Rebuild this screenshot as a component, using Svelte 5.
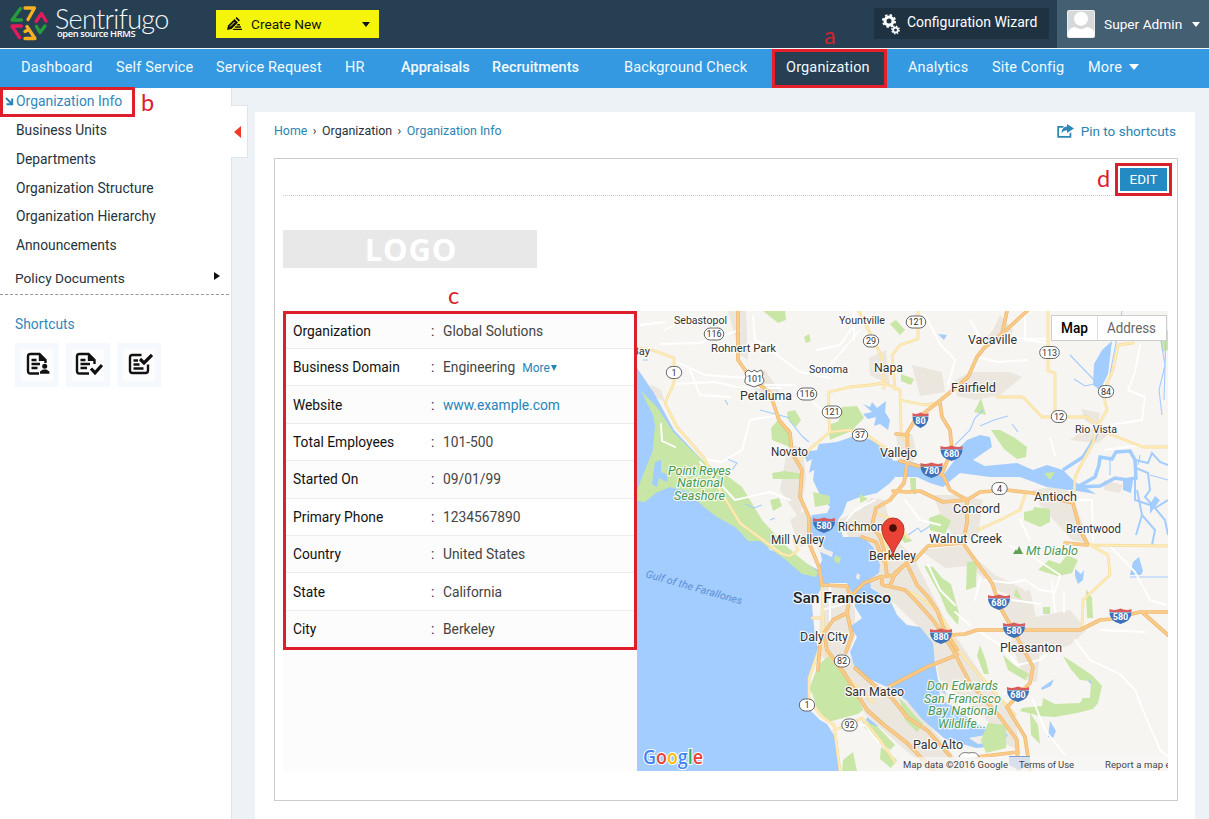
<script>
  const menu = ['Business Units', 'Departments', 'Organization Structure', 'Organization Hierarchy', 'Announcements'];

  const details = [
    ['Organization', 'Global Solutions'],
    ['Business Domain', 'Engineering', 'more'],
    ['Website', 'www.example.com', 'link'],
    ['Total Employees', '101-500'],
    ['Started On', '09/01/99'],
    ['Primary Phone', '1234567890'],
    ['Country', 'United States'],
    ['State', 'California'],
    ['City', 'Berkeley']
  ];

  const yellowRoads = [
    'M637 348L652 350 674 358 674 383 665 403 677 427 704 458 720 490 740 523 767 543 782 554 790 556 798 550 794 540',
    'M800 460L812 447 830 432 850 430 868 436 884 447 900 455',
    'M830 432L828 410 829 392 850 387 870 385 884 383 900 390 901 433 908 445',
    'M859 311L871 335 882 357 884 388M895 389L892 355 900 345 918 339 918 311',
    'M900 400L925 405 937 403M997 397L1023 397 1042 417 1087 417 1107 433 1143 447 1168 447',
    'M1048 311L1048 371 1055 373 1055 417',
    'M1133 343L1118 345 1113 370 1103 393 1107 410 1097 427 1093 443 1082 463 1075 477 1074 500',
    'M822 585L824 645 817 655 809 678 809 698 820 715 834 725 840 771M812 618L822 618',
    'M834 730L850 724 862 718 880 740 895 762M826 652L850 680 873 702',
    'M1087 543L1108 555 1110 575 1083 600 1082 627M1088 545L1168 546',
    'M900 588L920 597 938 612 950 630 958 650 988 685 1015 715',
    'M978 530L1000 520 1020 510 1025 495M878 514L895 520 908 538M888 563L886 545 880 530'
  ];

  const orangeRoads = [
    'M738 311L738 360 750 377 770 393 779 420 790 433 792 453 802 470 800 497 809 517 809 543 819 567 822 585',
    'M822 585L847 586 850 597 847 613 833 620 824 633 827 650 844 673 867 710 884 725 907 743 934 771',
    'M820 642L818 670M855 668L873 684 892 698 907 717 928 731 950 756',
    'M847 613L852 635 846 652',
    'M849 598L864 583 880 577 895 575 903 566',
    'M887 576L884 550 880 537 872 525 876 508 890 500 904 483 908 457 907 433 915 420 937 403 953 390 968 377 977 357 984 348 1003 333 1027 311',
    'M1007 311L1002 334M940 403L942 417 950 430 952 450 942 473 950 490 967 500 967 523 963 543 980 567 992 583 1000 607 1017 637 1033 667 1030 683 1007 707 1025 737 1030 771',
    'M893 491L908 492 920 491 943 502 967 500 980 492 1007 490 1033 493 1073 503 1080 530 1087 543',
    'M890 586L895 573 907 563 915 560 928 546 963 543',
    'M882 580Q880 586 888 586L905 590 917 602 933 620 953 650 970 683 1000 717 1017 740 1018 771M862 537L876 542 883 560',
    'M907 564L917 585 928 597 937 610 943 627 957 650M950 635L965 634 977 630 1000 630 1080 630 1100 620 1112 619 1140 612 1168 612M1142 612L1168 635',
    'M890 686L927 667 957 655M977 757L1018 752M900 461L925 468 942 475M896 434L908 435M1065 543L1087 545'
  ];

  const whiteRoads = [
    'M660 344L700 343 740 330M675 384L715 382 737 387 780 388M672 360L705 375 750 378M664 330L690 318',
    'M700 462L735 500 770 492 790 500M778 415L750 420 742 450 722 462 704 459M765 385L795 385 830 418',
    'M661 424L662 441 675 447M753 316L755 340 775 350M817 350L840 345 852 328M854 311L854 340',
    'M925 315L940 344 955 360 948 385M977 357L998 362 1027 360M1000 338L1048 339M1025 311L1025 340 1048 343',
    'M1140 345L1135 372 1128 390 1145 397 1142 420 1110 425M1105 450L1140 445M1050 438L1055 455',
    'M905 500L920 520 940 525M985 580L1010 583 1025 580 1040 590 1055 592 1060 575 1030 555 1010 546',
    'M977 630L1000 645 1018 665 1040 660 1057 645M1075 640L1090 660 1120 674 1135 690 1145 715 1160 750 1168 757',
    'M1070 500L1092 500 1093 540M1110 546L1135 572 1150 600 1166 605M1100 630L1145 632',
    'M928 565L940 590 955 605M975 600L980 580M955 612L970 625M1033 700L1045 730 1065 755M1005 693L1025 690',
    'M822 600L843 600M830 588L830 625M822 610L850 602M843 723L865 725 878 742M1020 520L1030 540',
    'M1052 582L1055 612M1064 592L1064 612M1012 600L1040 604M640 325L665 322M690 370L700 395 730 397',
    'M845 522L855 510 875 500M860 330L830 365M985 345L970 320M770 350L800 372 830 378'
  ];

  const parks = [
    'M641 391L657 407 674 433 704 462 730 478 742 487 747 495 762 520 785 545 800 558 818 572 816 577 802 574 786 560 768 547 760 541 748 541 742 534 735 527 717 517 704 507 688 492 670 487 656 493 645 502 637 501 637 490 653 450 655 425 653 415Z',
    'M763 311L785 311 786 320 778 323Z', 'M804 337L809 334 811 341 806 343Z',
    'M771 428L778 420 791 430 790 447 772 440Z', 'M787 412L795 410 801 420 796 427 788 420Z',
    'M842 407L857 406 864 418 850 432 838 424Z', 'M772 473L785 471 803 474 801 479 773 479Z',
    'M813 492L830 496 830 504 815 507Z', 'M770 500L779 498 782 506 773 511Z', 'M828 425L842 420 849 432 830 440Z',
    'M896 320L905 330 900 335 890 324Z M901 374L914 379 911 385 901 381Z',
    'M974 412L981 398 986 415Z', 'M991 430L1000 430 1015 438 1027 447 1026 457 1017 459 1004 449Z',
    'M1024 512L1033 510 1034 507 1050 509 1050 522 1040 527 1024 520Z', 'M1044 473L1055 472 1050 480Z',
    'M929 518L940 514 951 521 945 534 930 530Z M910 478L916 478 916 495 911 492Z',
    'M967 562L977 561 976 587 966 590Z', 'M1038 570L1049 560 1060 564 1067 555 1078 560 1072 573 1058 576Z',
    'M924 566L933 567 942 578 951 584 959 614 958 625 947 612 940 595Z',
    'M980 645L986 661 989 674 984 674 977 656Z M1043 607L1050 607 1050 614 1043 614Z',
    'M1063 656L1083 669 1093 676 1102 686 1098 703 1093 709 1077 713 1055 717 1040 716 1020 711 1022 708 1042 706 1043 698 1055 704 1080 703 1083 698 1090 698 1091 681 1080 680 1070 668Z',
    'M1030 713L1038 725 1040 744 1031 735Z M1160 333L1168 330 1168 350 1162 352Z',
    'M818 665L829 656 838 663 845 670 851 680 863 710 858 714 828 722 817 708 812 693 809 690Z',
    'M862 720L878 727 895 745 890 750 865 728Z M881 747L897 760 891 768 880 759Z',
    'M988 723L1006 725 1006 748 986 753 981 740Z M843 760L853 752 857 771 842 771Z',
    'M835 555L841 558 839 564 834 561Z M899 697L912 712 923 724 917 732 905 720Z',
    'M1086 589L1092 598 1093 618 1087 618Z M1003 655L1014 665 1029 674 1025 680 1008 670Z',
    'M888 519L900 527 912 541 905 543 892 530Z M860 494L868 499 860 503Z M1016 588L1022 600 1014 596Z'
  ];

  const urban = [
    'M728 311L746 311 748 360 740 355Z', 'M744 372L765 370 782 395 773 403 755 390Z', 'M869 358L886 350 890 385 870 375Z',
    'M650 384L661 390 665 402 654 397Z', 'M788 445L802 447 806 476 800 520 790 505 780 490Z',
    'M790 520L806 510 812 543 800 547Z', 'M838 520L860 510 871 498 884 500 888 515 896 540 912 555 930 590 948 625 965 650 985 680 1015 716 1020 750 1006 745 985 718 940 680 933 650 918 626 895 604 870 586 878 551 855 546Z',
    'M912 365L942 372 945 392 920 396Z M955 380L970 372 1010 372 1022 377 1000 395 975 400 957 396Z',
    'M980 345L993 330 1000 315 1013 330 1007 345Z', 'M896 432L912 434 917 455 905 475 898 455Z',
    'M933 495L960 495 983 500 978 535 960 543 945 525Z', 'M1033 490L1065 485 1075 505 1085 530 1087 543 1072 540 1040 505Z',
    'M822 586L845 584 855 610 855 636 848 655 870 682 912 705 940 738 965 771 930 771 895 741 865 714 845 676 818 654Z',
    'M920 550L962 546 995 575 1025 590 1020 600 997 590 970 566 945 568Z',
    'M1000 600L1030 590 1036 617 1070 610 1087 630 1070 645 1040 655 1015 650Z', 'M1070 440L1088 427 1108 435 1098 443Z',
    'M1081 409L1100 413 1097 429 1085 420Z', 'M1010 640L1040 650 1037 682 1025 680Z', 'M1104 480L1123 485 1120 493 1104 490Z', 'M963 680L985 690 978 702Z'
  ];

  const waters = [
    'M637 368L654 393 674 430 704 462 709 480 740 510 770 550 800 560 818 570 822 560 819 547 812 540 808 528 812 515 827 513 830 507 820 495 813 480 817 450 819 444 837 442 857 435 879 443 893 460 897 475 890 483 877 493 860 497 847 502 843 513 838 520 843 537 863 537 873 547 880 565 879 573 870 579 871 588 890 600 897 615 907 625 920 627 933 643 935 663 938 680 953 705 975 724 995 730 1008 735 1000 746 976 748 945 739 922 719 907 701 887 687 867 678 854 665 850 652 857 637 850 627 862 618 855 607 854 597 847 583 830 583 822 587 812 605 815 637 818 648 809 676 808 708 820 720 827 724 837 740 841 771 637 771Z',
    'M893 461L905 460 925 466 944 474 954 461 958 449 967 440 980 435 990 437 992 447 973 460 985 466 1017 463 1033 470 1047 465 1063 470 1075 482 1088 489 1096 494 1077 491 1047 487 1020 477 990 477 960 473 943 487 930 483 917 477 896 477Z',
    'M1094 364L1102 350 1112 341 1108 374 1100 390 1093 385Z',
    'M803 452L807 462 812 459 809 473 817 468 818 450Z',
    'M863 404L870 407 872 402 877 408 886 401 885 412 890 420 888 430 880 424 874 426 876 417 868 419 863 414 872 412Z',
    'M1075 569L1081 574 1084 570 1083 580 1078 584 1075 576Z',
    'M1133 562L1139 557 1143 571 1141 575 1130 575Z',
    'M1041 688L1054 679 1051 686 1042 690Z M1050 721L1056 731 1053 738 1048 737Z M1077 667L1093 680 1091 684 1078 672Z',
    'M938 334L947 335 944 340Z M1123 479L1133 480 1131 493 1123 490Z M1155 496L1160 500 1150 514 1150 504Z M867 717L878 726 874 728 866 720Z'
  ];

  const islands = [
    'M815 543L820 542 825 549 833 552 832 557 825 554 818 551Z',
    'M857 573L860 575 859 580 856 578Z',
    'M939 690L952 698 962 710 952 706 941 700Z',
    'M969 738L985 735 994 742 978 744Z'
  ];

  const streams = [
    'M1063 470L1083 457 1095 438 1099 427', 'M1077 487L1095 477 1099 465 1100 457 1112 459 1116 452 1130 451 1135 460 1136 478 1124 480',
    'M1077 487L1100 486 1115 478 1128 480'
  ];
  const creeks = [
    'M1110 374L1122 311M1094 380L1070 355M1094 384L1085 386 1074 379M980 426L994 420 1008 416M1012 424L1018 432M955 445L970 430 975 418 983 410',
    'M1160 335L1165 365 1159 390 1162 415M1166 333L1164 400M1140 455L1138 465M1110 460L1110 475M1150 475L1168 480',
    'M1130 577L1168 577M727 459L737 463 732 470M745 504L754 508 762 505M770 520L775 518M790 421L802 436 809 442M760 410L790 418',
    'M908 535L918 528 921 532 930 526M643 360L648 360M725 400L728 405'
  ];
  const delta = [
    'M1135 460L1148 463 1152 453 1160 462 1168 465M1136 468L1148 473 1150 490 1145 497 1155 508 1168 500M1137 490L1142 515 1136 535M1142 515L1155 530 1152 545M1135 478L1135 500 1150 505M1155 508L1165 520 1168 535'
  ];

  const shields = [
    ['116', 714, 334], ['1', 674, 372.5], ['116', 807, 394], ['121', 832, 412], ['37', 860, 435], ['29', 871, 341],
    ['121', 916, 322], ['113', 1049.5, 352.5], ['84', 1106, 391.5], ['12', 1059, 416.5], ['4', 999.5, 488.5], ['82', 842, 661], ['1', 807, 705], ['92', 849.5, 725]
  ];
  const interstates = [
    ['80', 920.5, 420], ['680', 951.5, 453], ['780', 931.5, 470], ['580', 824, 525], ['680', 999, 602], ['580', 1014, 630],
    ['880', 941, 636], ['580', 1120.5, 616], ['680', 1018, 694]
  ];

  // name, left edge, baseline, size, width, kind
  const places = [
    ['Sebastopol', 674, 324, 10.8, 53], ['Rohnert Park', 711, 352, 11.8, 65], ['Yountville', 839, 324, 10.8, 46],
    ['Vacaville', 968, 344, 12.3, 49], ['Sonoma', 809, 373, 10.8, 39], ['Napa', 874, 371.5, 13, 29],
    ['Petaluma', 740, 400, 13, 52], ['Fairfield', 951, 392, 12.8, 45], ['Rio Vista', 1075, 433, 10.8, 42],
    ['Novato', 771, 455.5, 12, 37], ['Vallejo', 880, 457, 12.8, 37], ['Antioch', 1034, 500.5, 12.6, 43],
    ['Concord', 953, 513, 12.8, 47], ['Brentwood', 1066, 533, 12, 55], ['Walnut Creek', 929, 542.5, 12.8, 73],
    ['Mill Valley', 771, 544, 12, 53], ['Richmond', 838, 531, 12.8, 52], ['Berkeley', 869, 560, 12.6, 47],
    ['San Francisco', 793, 603, 15.5, 98, 'big'], ['Daly City', 800, 640.5, 12.6, 48], ['San Mateo', 845, 696, 12.6, 59],
    ['Pleasanton', 1000, 652, 12.6, 62], ['Palo Alto', 913, 748.5, 12.8, 50], ['Bay', 632, 355, 10.8, 18],
    ['Point Reyes', 668, 474.5, 12.4, 63, 'park'], ['National', 677, 487, 12.4, 46, 'park'], ['Seashore', 674, 499.5, 12.4, 51, 'park'],
    ['Mt Diablo', 1026, 555, 12.4, 52, 'park'], ['Don Edwards', 927, 690, 12.4, 71, 'park'],
    ['San Francisco', 924, 702.5, 12.4, 77, 'park'], ['Bay National', 928, 715, 12.4, 69, 'park'], ['Wildlife...', 938, 727.5, 12.4, 48, 'park']
  ];
</script>

<div class="page">
  <header>
    <div class="brand">
      <svg width="40" height="37" viewBox="0 0 40 37" fill="none" stroke-width="3.3" stroke-linecap="round" stroke-linejoin="round">
        <path d="M11.5 3.5L3 15H12.5" stroke="#279b3c" /><path d="M16 3H25.5L19 14.5" stroke="#f7b023" />
        <path d="M27 16.5L32.5 8.5L37 16" stroke="#e21c5b" /><path d="M12.5 21H3L10.5 32.5" stroke="#e21c5b" />
        <path d="M27.5 21.5L31 27.5L36 21" stroke="#279b3c" /><path d="M18 21.5L20 24.5M16 33.5H26L20 24.5L16 26.5" stroke="#f7b023" />
      </svg>
      <div class="names"><span class="word">Sentrifugo</span><span class="tag">open source HRMS</span></div>
    </div>
    <div class="create">
      <svg width="17" height="14" viewBox="0 0 17 14" fill="#111"><path d="M1 13L2 8.5 8.5 2 12 5.5 5.5 12ZM9.5 1.2L10.7 0 14 3.3 12.8 4.5ZM11.5 7H14V8.4H10.5ZM9.5 9.3H15V10.7H8.5ZM7.5 11.7H16V13H6.5Z" /><path d="M4 9.5L8.5 5" stroke="#f5f50c" /></svg>
      <span>Create New</span><i class="caret dark"></i>
    </div>
    <div class="wizard">
      <svg width="20" height="22" viewBox="0 0 20 22" fill="none" stroke="#fff">
        <circle cx="7" cy="8" r="4" stroke-width="3" /><circle cx="7" cy="8" r="6" stroke-width="2" stroke-dasharray="2.4 2.31" />
        <circle cx="13.5" cy="17" r="2.4" stroke-width="1.8" /><circle cx="13.5" cy="17" r="3.7" stroke-width="1.4" stroke-dasharray="1.5 1.4" />
      </svg>
      <span>Configuration Wizard</span>
    </div>
    <div class="user">
      <svg width="28" height="28" viewBox="0 0 28 28"><rect x=".5" y=".5" width="27" height="27" rx="1" fill="#d7d8da" stroke="#eee" /><circle cx="14" cy="8.7" r="7" fill="#fff" /><path d="M1 27V22Q2 18 8 17Q14 21 20 17Q26 18 27 22V27Z" fill="#fff" /></svg>
      <span>Super Admin</span><i class="caret"></i>
    </div>
  </header>

  <nav>
    <span>Dashboard</span><span>Self Service</span><span>Service Request</span><span>HR</span>
    <span class="bold">Appraisals</span><span class="bold">Recruitments</span><span>Background Check</span>
    <span class="active">Organization</span><span>Analytics</span><span>Site Config</span><span>More <i class="caret large"></i></span>
    <b class="mark mark-a">a</b>
  </nav>

  <div class="body">
    <aside>
      <div class="current">
        <svg width="9" height="9" viewBox="0 0 9 9" fill="none" stroke="#2684bd" stroke-width="2"><path d="M1 1L6.5 6.5M7.2 1.5V7.2H1.5" /></svg>
        <span>Organization Info</span><b class="mark mark-b">b</b>
      </div>
      {#each menu as item}<div class="item">{item}</div>{/each}
      <div class="policy"><span>Policy Documents</span><i></i></div>
      <h4>Shortcuts</h4>
      <div class="shortcuts">
        <div><svg width="24" height="24" viewBox="0 0 24 24" fill="none" stroke="#111" stroke-width="2.4"><path d="M13 21.5H4.5Q2 21.5 2 19V4.5Q2 2 4.5 2H13.5L19.5 8V11M5.5 8H10.5M5.5 12H14M5.5 16H11.5" /><g fill="#111" stroke="none"><path d="M12.8 2L20 9H12.8Z" /><circle cx="18.7" cy="14.2" r="2.5" /><path d="M14 21.8V19.5L17 17.5H20.4L23.4 19.5V21.8Z" /></g></svg></div>
        <div><svg width="28" height="24" viewBox="0 0 28 24" fill="none" stroke="#111" stroke-width="2.4"><path d="M14 21.5H4.5Q2 21.5 2 19V4.5Q2 2 4.5 2H13.5L19.5 8V12M5.5 8H10.5M5.5 12H15M5.5 16H12" /><path d="M12.8 2L20 9H12.8Z" fill="#111" stroke="none" /><path d="M16 16.5L20 20.8L27 13" stroke-width="3.2" /></svg></div>
        <div><svg width="25" height="24" viewBox="0 0 25 24" fill="none" stroke="#111" stroke-width="2.4"><path d="M13.5 3H4.5Q2 3 2 5.5V18.5Q2 21 4.5 21H17.5Q20 21 20 18.5V12.5M5.5 8.5H10M5.5 12.5H11.5M5.5 16.5H15.5" /><path d="M12 7L16 11L24 3" stroke-width="3.2" /></svg></div>
      </div>
      <div class="handle"><i></i></div>
    </aside>

    <main>
      <div class="crumbs">
        <a>Home</a><em>›</em><span>Organization</span><em>›</em><a>Organization Info</a>
        <div class="pin">
          <svg width="17" height="14" viewBox="0 0 17 14" fill="#2c87b5"><path d="M10 0L17 4.5 10 9V6.3Q6.5 6.2 4.5 9Q4.8 3 10 2.5ZM6.5 2V3.7H2V12H12.5V9.5L14.3 8.2V13.7H.3V2Z" /></svg>
          <a>Pin to shortcuts</a>
        </div>
      </div>
      <section class="card">
        <div class="toolbar"><b class="mark mark-d">d</b><div class="edit"><span>EDIT</span></div></div>
        <div class="logo">LOGO</div>
        <div class="split">
          <div class="left">
            <b class="mark mark-c">c</b>
            <dl>
              {#each details as [label, value, kind]}
                <div class="row"><dt>{label}</dt><span>:</span><dd class:link={kind === 'link'}>{value}{#if kind === 'more'}<a class="expand">More<i></i></a>{/if}</dd></div>
              {/each}
            </dl>
          </div>
          <svg class="map" width="531" height="460" viewBox="637 311 531 460">
            <rect x="637" y="311" width="531" height="460" fill="#f7f5f1" />
            <g fill="#ebe6de">{#each urban as d}<path {d} />{/each}</g>
            <g fill="#a3ccff">{#each waters as d}<path {d} />{/each}</g>
            <g fill="#f1eee9">{#each islands as d}<path {d} />{/each}</g>
            <g fill="#c8e6a6">{#each parks as d}<path {d} />{/each}</g>
            <path d="M655 462L661 460 661 472 668 475 667 482 659 478 657 487 652 484Z" fill="#a3ccff" />
            <g fill="none" stroke="#a3ccff" stroke-width="3.5">{#each streams as d}<path {d} />{/each}</g>
            <g fill="none" stroke="#a3ccff" stroke-width="2">{#each delta as d}<path {d} />{/each}</g>
            <g fill="none" stroke="#a3ccff" stroke-width="1.1">{#each creeks as d}<path {d} />{/each}</g>
            <g class="road" stroke="#fff" stroke-width="1.9">{#each whiteRoads as d}<path {d} />{/each}</g>
            <g class="road" stroke="#f5dc9c" stroke-width="2.8">{#each yellowRoads as d}<path {d} />{/each}</g>
            <g class="road" stroke="#ffecb8" stroke-width="1.6">{#each yellowRoads as d}<path {d} />{/each}</g>
            <g class="road" stroke="#edb772" stroke-width="3.7">{#each orangeRoads as d}<path {d} />{/each}</g>
            <g class="road" stroke="#fbcb88" stroke-width="2.3">{#each orangeRoads as d}<path {d} />{/each}</g>
            {#each shields as [n, x, y]}
              <rect x={x - (n.length > 2 ? 9.8 : 7.7)} y={y - 6} width={n.length > 2 ? 19.6 : 15.4} height="12" rx="6" fill="#fff" stroke="#666" />
              <text class="num" {x} y={y + 3.3}>{n}</text>
            {/each}
            <path d="M746 372L748 370 752 372 754 370 757 372 761 370 763 373Q761 377 764 380Q764 384 759 385L754 387 749 385Q744 384 745 380Q747 376 745 373Z" fill="#fff" stroke="#666" />
            <text class="num" x="754.5" y="381.8">101</text>
            {#each interstates as [n, x, y]}
              {@const w = n.length > 2 ? 11 : 8}
              <path d="M{x - w} {y - 3.5}H{x + w}Q{x + w} {y + 5} {x} {y + 8}Q{x - w} {y + 5} {x - w} {y - 3.5}Z" fill="#3d71b8" />
              <path d="M{x - w} {y - 4}V{y - 7}Q{x - w / 2} {y - 5} {x} {y - 7.5}Q{x + w / 2} {y - 5} {x + w} {y - 7}V{y - 4}Z" fill="#da5b5b" />
              <text class="inum" {x} y={y + 4}>{n}</text>
            {/each}
            {#each places as [name, x, y, size, w, kind]}
              <text class="place {kind ?? ''}" {x} {y} font-size={size} textLength={w} lengthAdjust="spacingAndGlyphs">{name}</text>
            {/each}
            <text class="gulf" x="645" y="577" transform="rotate(16 645 577)" textLength="100" lengthAdjust="spacingAndGlyphs">Gulf of the Farallones</text>
            <path d="M1013 554L1016 549 1017 551 1019 546 1023 554Z" fill="#5da04e" />
            <path d="M893 557C892 545 882 541 882 529A11 11 0 0 1 904 529C904 541 894 545 893 557Z" fill="#ea4335" stroke="#b4392f" />
            <circle cx="893" cy="528" r="3.8" fill="#4b0d08" />
            <path d="M959 757Q961 751 969 753Q977 751 979 757" fill="#fff" stroke="#777" />
            <path d="M1009 756H1030V765L1019 770 1009 765Z" fill="#7f9fd0" />
            <rect x="898" y="757" width="270" height="14" fill="#f7f6f4" fill-opacity=".75" />
            <text class="google" x="643" y="763.5" textLength="60" lengthAdjust="spacingAndGlyphs"><tspan fill="#4285f4">G</tspan><tspan fill="#ea4335">o</tspan><tspan fill="#fbbc05">o</tspan><tspan fill="#4285f4">g</tspan><tspan fill="#34a853">l</tspan><tspan fill="#ea4335">e</tspan></text>
            <g class="legal"><text x="903" y="767.5" textLength="105">Map data ©2016 Google</text><text x="1019" y="767.5" textLength="55">Terms of Use</text><text x="1105" y="767.5" textLength="81">Report a map error</text></g>
            <rect x="1051.5" y="315.5" width="115" height="25" fill="#fff" stroke="#ccc" />
            <path d="M1097.5 316V340" stroke="#ddd" />
            <text class="tab on" x="1061" y="333" textLength="27" lengthAdjust="spacingAndGlyphs">Map</text><text class="tab" x="1107" y="333" textLength="49" lengthAdjust="spacingAndGlyphs">Address</text>
          </svg>
        </div>
      </section>
    </main>
  </div>
</div>

<style>
  :global(body) { margin: 0; overflow: hidden; }
  .page { width: 1209px; height: 819px; overflow: hidden; background: #edf2f7; font: 14px/20px Roboto, sans-serif; color: #26323c; position: relative; display: flex; flex-direction: column; white-space: nowrap; }
  * { box-sizing: border-box; }
  i { display: inline-block; width: 0; height: 0; }
  svg { flex: none; display: block; }

  header { height: 48px; flex: none; background: #263f52; display: flex; color: #fff; }
  .brand { width: 216px; display: flex; padding: 5px 0 0 9px; }
  .names { display: flex; flex-direction: column; margin-left: 6px; }
  .word { font: 300 27px/28px Lato, sans-serif; letter-spacing: -.7px; color: #f5f8fa; }
  .tag { font: 600 9.3px/10px "Open Sans", sans-serif; letter-spacing: -.38px; margin: -4px 0 0 2px; }
  .create { width: 163px; height: 28px; margin-top: 10px; background: #f5f50c; color: #111; display: flex; align-items: center; padding: 0 9px 0 10px; }
  .create span { margin-left: 8px; flex: 1; font-size: 13.7px; }
  .caret { border: 4.5px solid transparent; border-top: 5px solid #fff; border-bottom: 0; }
  .caret.dark { border-top-color: #111; }
  .caret.large { border-width: 6px 5px 0; margin-left: 3px; vertical-align: 2px; }
  .wizard { margin: 8px 8px 0 495px; width: 175px; height: 31px; background: #1e3242; display: flex; align-items: center; padding-left: 8px; }
  .wizard span { margin: -3px 0 0 5px; }
  .user { flex: 1; background: #445e72; display: flex; align-items: center; padding: 0 9px 0 10px; }
  .user span { margin-left: 9px; flex: 1; font-size: 13.7px; }

  nav { flex: none; height: 40px; border-top: 1px solid #f4f8fb; background: #3499e0; display: grid; grid-template-columns: 95px 100px 129px 56px 91px 132px 148px 136px 84px 96px 1fr; padding-left: 21px; line-height: 37px; color: #f3f9fe; font-size: 14.5px; letter-spacing: .15px; position: relative; }
  .bold { font-weight: 500; letter-spacing: 0; }
  .active { width: 115px; height: 39px; background: #263f52; border: 3px solid #e3202b; line-height: 31px; padding-left: 11px; }
  .mark { position: absolute; font: 400 23.5px/24px Lato, sans-serif; letter-spacing: 0; color: #d9222e; }
  .mark-a { left: 824px; top: -26px; }

  .body { display: flex; flex: 1; }
  aside { width: 232px; background: #fff; border-right: 1px solid #dfe4e9; position: relative; flex: none; }
  .current { width: 135px; height: 30px; margin-top: -1px; border: 3px solid #dc1f2a; display: flex; align-items: center; padding: 0 0 2px 2px; color: #2f87bd; position: relative; }
  .current span { margin-left: 2px; font-size: 13.9px; }
  .mark-b { left: 138px; top: 0; }
  .item { height: 28.75px; line-height: 27px; padding-left: 16px; font-size: 13.8px; }
  .policy { width: 229px; height: 34px; border-bottom: 1px dashed #999; padding: 7px 9px 0 15px; display: flex; justify-content: space-between; font-size: 13.7px; }
  .policy i { border: 4px solid transparent; border-left: 6px solid #111; border-right: 0; margin-top: 4px; }
  h4 { margin: 19px 0 0 15px; font-weight: 400; font-size: 13.8px; color: #3586b7; }
  .shortcuts { display: flex; gap: 7px; padding: 9px 0 0 15px; }
  .shortcuts div { width: 44px; height: 44px; border: 6px solid #f5f8fd; background: #fdfdfe; display: flex; align-items: center; justify-content: center; }
  .shortcuts svg { position: relative; left: 1px; top: -1px; }
  .handle { position: absolute; left: 231px; top: 17px; width: 17px; height: 53px; background: #fff; border: 1px solid #e0e5ea; border-left: 0; padding: 20px 0 0 3px; }
  .handle i { border: 6px solid transparent; border-right: 7px solid #f0392b; border-left: 0; display: block; }

  main { margin: 24px 0 0 23px; width: 940px; background: #fff; padding: 0 18px 0 19px; height: 707px; }
  .crumbs { height: 46px; display: flex; align-items: center; padding-bottom: 8px; font-size: 12.4px; }
  .crumbs a { color: #2c84b0; }
  .crumbs em { font-style: normal; margin: 0 5.5px; }
  .pin { margin-left: auto; padding-right: 1px; display: flex; align-items: center; gap: 7px; font-size: 13.5px; }
  .card { width: 904px; height: 643px; border: 1px solid #ccc; padding: 0 8px; }
  .toolbar { height: 37px; border-bottom: 1px dotted #ccc; position: relative; display: flex; justify-content: flex-end; margin-right: 1px; }
  .edit { width: 57px; height: 33px; border: 3px solid #d9202b; padding: 2px; margin: 4px -4px 0 0; background: #fff; }
  .edit span { display: block; background: #238ac2; color: #fff; height: 23px; line-height: 23px; text-align: center; font-size: 13.5px; }
  .mark-d { left: 814px; top: 7px; }
  .logo { width: 254px; height: 38px; margin-top: 34px; background: #e8e8e8; color: #fff; font: 700 31px/39px "Open Sans", sans-serif; text-align: center; letter-spacing: .8px; padding-left: 2px; }
  .split { display: flex; margin-top: 43px; width: 885px; }
  .left { width: 354px; height: 460px; background: #fcfcfc; position: relative; flex: none; }
  .mark-c { left: 165px; top: -28px; }
  dl { margin: 0; width: 354px; height: 339px; border: 3px solid #dc1f2a; }
  .row { height: 37.4px; display: grid; grid-template-columns: 138px 12px 1fr; align-items: center; padding-left: 7px; border-bottom: 1px solid #ececec; font-size: 13.8px; }
  .row:first-child { height: 35px; }
  .row:last-child { border: 0; }
  .row:nth-child(even) { background: #fff; }
  dt { color: #111; }
  dd { margin: 0; color: #444; }
  .link, .expand { color: #2585b8; }
  .expand { font-size: 12px; margin-left: 7px; }
  .expand i { border: 3.5px solid transparent; border-top: 6px solid #2585b8; border-bottom: 0; margin-left: 1px; vertical-align: 1px; }

  .map { overflow: hidden; font-family: Roboto, sans-serif; }
  .road { fill: none; stroke-linejoin: round; stroke-linecap: round; }
  .num { font-size: 9px; text-anchor: middle; fill: #333; }
  .inum { font-size: 9px; font-weight: 700; text-anchor: middle; fill: #fff; }
  .place { fill: #333; stroke: #fff; stroke-width: 2.4px; stroke-opacity: .8; paint-order: stroke; }
  .big { font-weight: 500; fill: #222; }
  .park { fill: #4c9a52; font-style: italic; }
  .gulf { font-size: 10.5px; font-style: italic; fill: #5d8fd3; }
  .google { font: 600 19px "Open Sans", sans-serif; stroke: #fff; stroke-width: 2px; paint-order: stroke; }
  .legal { font-size: 9.5px; fill: #444; }
  .tab { font-size: 14px; fill: #666; }
  .tab.on { fill: #000; font-weight: 500; }
</style>
